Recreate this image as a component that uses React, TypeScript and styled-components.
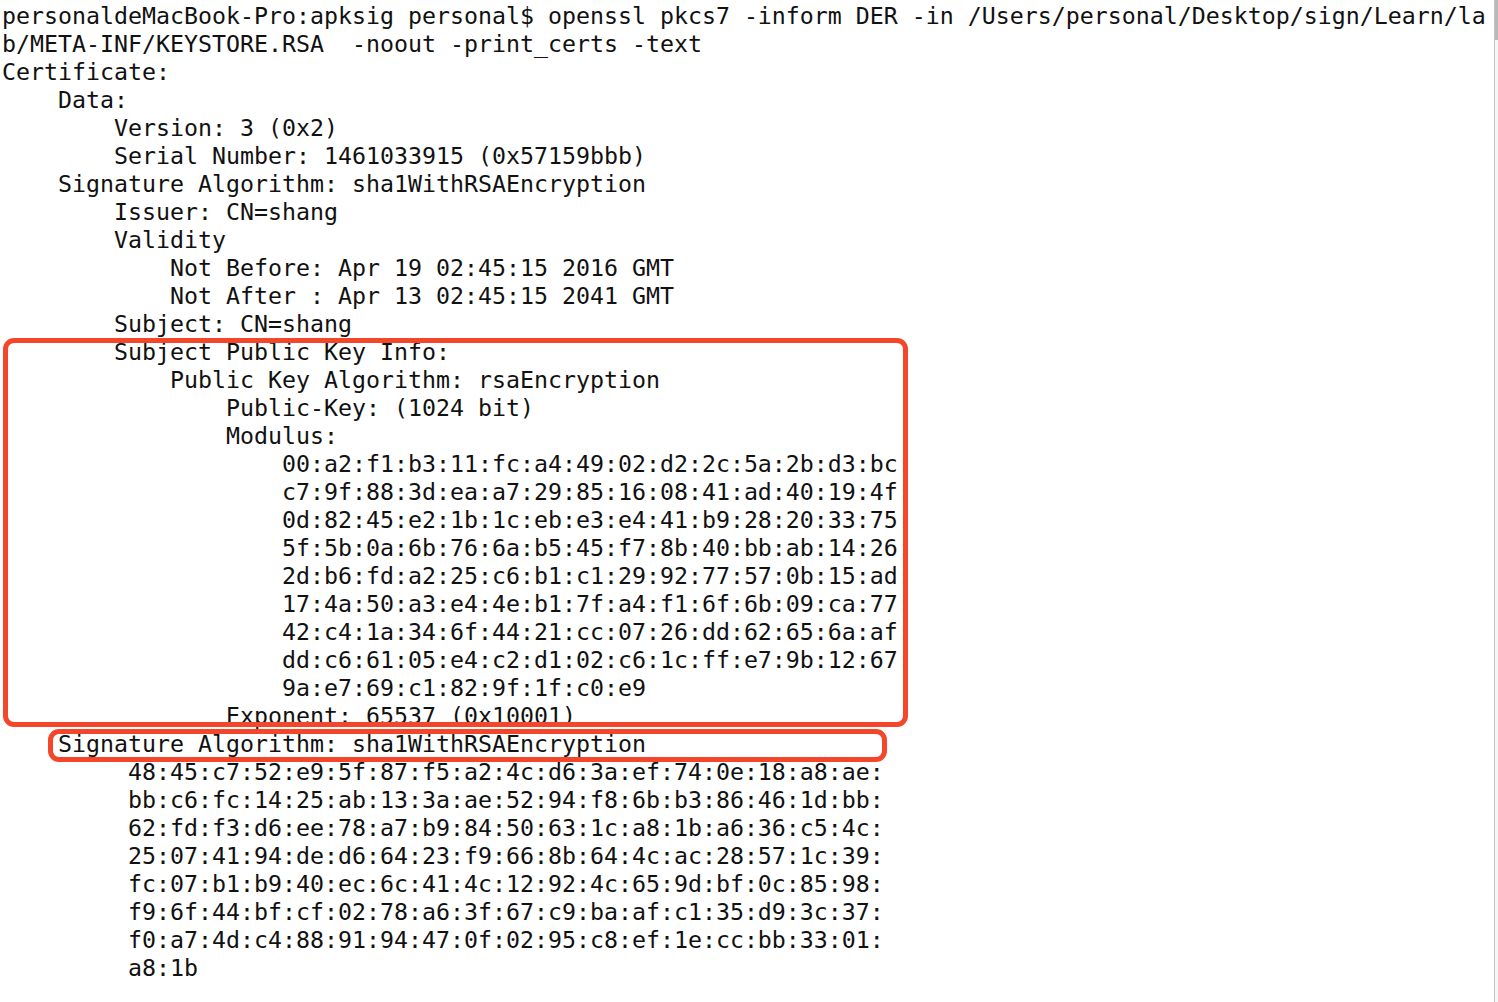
import React from "react";
import styled, { createGlobalStyle } from "styled-components";

const GlobalStyle = createGlobalStyle`
  html, body {
    margin: 0;
    padding: 0;
    background: #ffffff;
  }
  body {
    font-family: "DejaVu Sans Mono", "Liberation Mono", monospace;
  }
`;

const Window = styled.div`
  display: flex;
  width: 1498px;
  height: 1002px;
  background: #ffffff;
  overflow: hidden;
`;

const Terminal = styled.div`
  flex: 1;
  padding: 2px 0 0 2px;
  font-family: "DejaVu Sans Mono", "Liberation Mono", monospace;
  font-size: 23.25px;
  line-height: 28px;
  color: #111111;
`;

const Line = styled.div`
  height: 28px;
  white-space: pre;
`;

const Highlight = styled.div<{
  $left: number;
  $width: number;
  $top: number;
  $bottom: number;
}>`
  position: relative;
  margin-left: -2px;
  padding-left: 2px;

  &::after {
    content: "";
    position: absolute;
    left: ${(p) => p.$left}px;
    width: ${(p) => p.$width}px;
    top: ${(p) => p.$top}px;
    bottom: ${(p) => p.$bottom}px;
    box-sizing: border-box;
    border: 5px solid #f4462a;
    border-radius: 11px;
    pointer-events: none;
  }
`;

const Scrollbar = styled.div`
  position: relative;
  width: 3px;
  border-left: 1px solid #c4c4c4;
  background: #f6f6f6;
`;

const Thumb = styled.div`
  width: 3px;
  height: 40px;
  background: #b9b9b9;
`;

const header = [
  "personaldeMacBook-Pro:apksig personal$ openssl pkcs7 -inform DER -in /Users/personal/Desktop/sign/Learn/la",
  "b/META-INF/KEYSTORE.RSA  -noout -print_certs -text",
  "Certificate:",
  "    Data:",
  "        Version: 3 (0x2)",
  "        Serial Number: 1461033915 (0x57159bbb)",
  "    Signature Algorithm: sha1WithRSAEncryption",
  "        Issuer: CN=shang",
  "        Validity",
  "            Not Before: Apr 19 02:45:15 2016 GMT",
  "            Not After : Apr 13 02:45:15 2041 GMT",
  "        Subject: CN=shang",
];

const keyInfo = [
  "        Subject Public Key Info:",
  "            Public Key Algorithm: rsaEncryption",
  "                Public-Key: (1024 bit)",
  "                Modulus:",
  "                    00:a2:f1:b3:11:fc:a4:49:02:d2:2c:5a:2b:d3:bc:",
  "                    c7:9f:88:3d:ea:a7:29:85:16:08:41:ad:40:19:4f:",
  "                    0d:82:45:e2:1b:1c:eb:e3:e4:41:b9:28:20:33:75:",
  "                    5f:5b:0a:6b:76:6a:b5:45:f7:8b:40:bb:ab:14:26:",
  "                    2d:b6:fd:a2:25:c6:b1:c1:29:92:77:57:0b:15:ad:",
  "                    17:4a:50:a3:e4:4e:b1:7f:a4:f1:6f:6b:09:ca:77:",
  "                    42:c4:1a:34:6f:44:21:cc:07:26:dd:62:65:6a:af:",
  "                    dd:c6:61:05:e4:c2:d1:02:c6:1c:ff:e7:9b:12:67:",
  "                    9a:e7:69:c1:82:9f:1f:c0:e9",
  "                Exponent: 65537 (0x10001)",
];

const sigAlg = "    Signature Algorithm: sha1WithRSAEncryption";

const signature = [
  "         48:45:c7:52:e9:5f:87:f5:a2:4c:d6:3a:ef:74:0e:18:a8:ae:",
  "         bb:c6:fc:14:25:ab:13:3a:ae:52:94:f8:6b:b3:86:46:1d:bb:",
  "         62:fd:f3:d6:ee:78:a7:b9:84:50:63:1c:a8:1b:a6:36:c5:4c:",
  "         25:07:41:94:de:d6:64:23:f9:66:8b:64:4c:ac:28:57:1c:39:",
  "         fc:07:b1:b9:40:ec:6c:41:4c:12:92:4c:65:9d:bf:0c:85:98:",
  "         f9:6f:44:bf:cf:02:78:a6:3f:67:c9:ba:af:c1:35:d9:3c:37:",
  "         f0:a7:4d:c4:88:91:94:47:0f:02:95:c8:ef:1e:cc:bb:33:01:",
  "         a8:1b",
];

export default function App() {
  return (
    <>
      <GlobalStyle />
      <Window>
        <Terminal>
          {header.map((l, i) => (
            <Line key={`h${i}`}>{l}</Line>
          ))}
          <Highlight $left={3} $width={905} $top={0} $bottom={3}>
            {keyInfo.map((l, i) => (
              <Line key={`k${i}`}>{l}</Line>
            ))}
          </Highlight>
          <Highlight $left={48} $width={839} $top={-1} $bottom={-4}>
            <Line>{sigAlg}</Line>
          </Highlight>
          {signature.map((l, i) => (
            <Line key={`s${i}`}>{l}</Line>
          ))}
        </Terminal>
        <Scrollbar>
          <Thumb />
        </Scrollbar>
      </Window>
    </>
  );
}
